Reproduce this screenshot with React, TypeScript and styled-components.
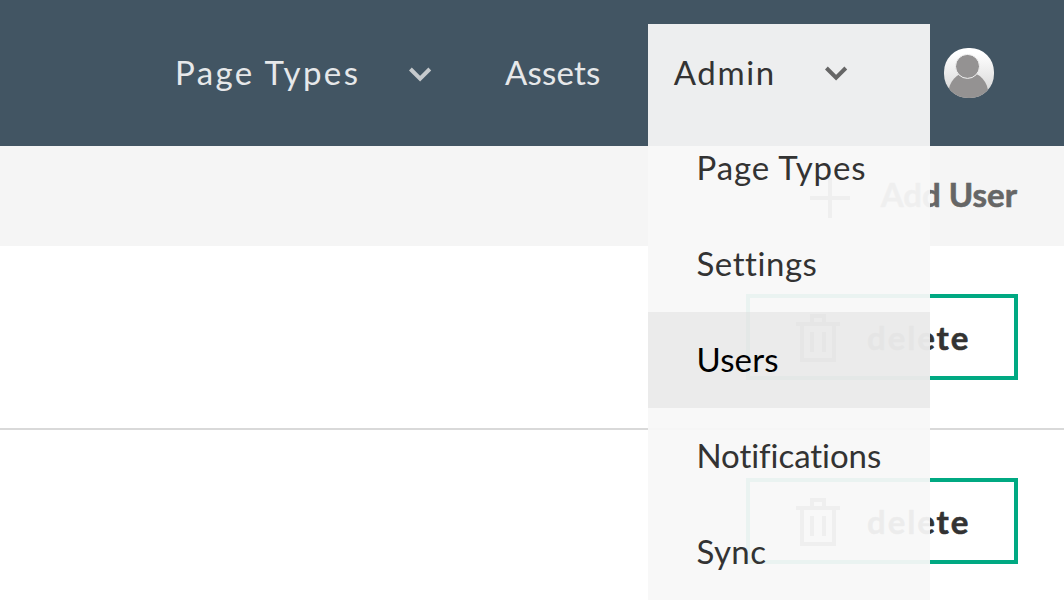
import React from "react";
import styled, { createGlobalStyle } from "styled-components";

const GlobalStyle = createGlobalStyle`
  * { box-sizing: border-box; }
  body {
    margin: 0;
    background: #fff;
    color: #333;
    font-family: Lato, "Liberation Sans", sans-serif;
    font-size: 33px;
    line-height: 40px;
    overflow: hidden;
  }
`;

const Page = styled.div`
  width: 1064px;
  height: 608px;
  overflow: hidden;
`;

const Header = styled.header`
  display: flex;
  justify-content: flex-end;
  align-items: center;
  height: 146px;
  padding-right: 70px;
  background: #425563;
`;

const Nav = styled.nav`
  display: flex;
  gap: 24px;
  height: 98px;
  margin-right: 14px;
`;

const NavItem = styled.div<{ $width: number }>`
  position: relative;
  display: flex;
  align-items: center;
  width: ${(p) => p.$width}px;
  height: 98px;
  padding: 0 0 1px 25px;
  color: #e6e8ea;
`;

const Label = styled.span<{ $spacing?: number; $width?: number; $lift?: number }>`
  flex: none;
  width: ${(p) => (p.$width ? `${p.$width}px` : "auto")};
  padding-bottom: ${(p) => p.$lift ?? 0}px;
  letter-spacing: ${(p) => p.$spacing ?? 0}px;
  white-space: nowrap;
`;

const StrongLabel = styled(Label)`
  font-weight: 700;
  -webkit-text-stroke: 0.6px currentColor;
`;

const Dropdown = styled.div`
  position: absolute;
  z-index: 2;
  top: 0;
  left: 0;
  width: 282px;
  background: rgba(248, 248, 248, 0.945);
  color: #333;
`;

const DropdownHead = styled.div`
  display: flex;
  align-items: center;
  height: 96px;
  padding-left: 25.7px;
`;

const MenuItem = styled.div<{ $active?: boolean }>`
  display: flex;
  align-items: center;
  height: 96px;
  padding: 0 0 2px 48.5px;
  background: ${(p) => (p.$active ? "rgba(221, 221, 221, 0.5)" : "transparent")};
  color: ${(p) => (p.$active ? "#000" : "#333")};
`;

const Avatar = styled.div`
  width: 50px;
  height: 50px;
  border-radius: 24px;
  overflow: hidden;
  background: linear-gradient(#fff 10%, #d2d2d2);

  svg { display: block; }
`;

const Toolbar = styled.div`
  display: flex;
  justify-content: flex-end;
  align-items: center;
  height: 100px;
  padding: 4px 47px 0 0;
  background: #f5f5f5;
  color: #666;

  svg { margin-right: 31px; }
`;

const Row = styled.div`
  display: flex;
  justify-content: flex-end;
  height: 184px;
  padding: 48px 46px 0 0;
  border-bottom: 2px solid #d9d9d9;
`;

const DeleteButton = styled.div`
  display: flex;
  align-items: center;
  width: 272px;
  height: 86px;
  padding-left: 46px;
  border: 4px solid #00a982;

  svg { flex: none; margin: 2px 27px 0 0; }
`;

const Chevron = ({ color }: { color: string }) => (
  <svg width="24" height="24" viewBox="0 0 24 24" fill="none" stroke={color} strokeWidth="4">
    <path d="M1.4 8 11.1 17.6 20.8 8" />
  </svg>
);

const Plus = () => (
  <svg width="40" height="40" viewBox="0 0 40 40" stroke="#666" strokeWidth="4">
    <path d="M20 0V40M0 20H40" />
  </svg>
);

const Trash = () => (
  <svg width="44" height="48" viewBox="0 0 44 48" fill="none" stroke="#666" strokeWidth="4">
    <path d="M6 10V46H38V10M0 10H44M16 10V2H28V10M16 18V38M28 18V38" />
  </svg>
);

const Person = () => (
  <svg width="50" height="50" viewBox="0 0 50 50" fill="#949292">
    <ellipse cx="24.3" cy="46" rx="20" ry="22" />
    <circle cx="23.5" cy="18.4" r="12" stroke="#f2f2f2" strokeWidth="1" />
  </svg>
);

const menu = [
  { name: "Page Types", spacing: 0.85 },
  { name: "Settings", spacing: 0.55 },
  { name: "Users", spacing: 0.15, active: true },
  { name: "Notifications", spacing: -0.06 },
  { name: "Sync", spacing: 0.4 },
];

export default function App() {
  return (
    <Page>
      <GlobalStyle />
      <Header>
        <Nav>
          <NavItem $width={306}>
            <Label $spacing={2.4} $width={234} $lift={1}>Page Types</Label>
            <Chevron color="#c6cacd" />
          </NavItem>
          <NavItem $width={144}>
            <Label $spacing={0.2} $lift={1}>Assets</Label>
          </NavItem>
          <NavItem $width={282}>
            <Dropdown>
              <DropdownHead>
                <Label $spacing={1.65} $width={151.3}>Admin</Label>
                <Chevron color="#666" />
              </DropdownHead>
              {menu.map((m) => (
                <MenuItem key={m.name} $active={m.active}>
                  <Label $spacing={m.spacing}>{m.name}</Label>
                </MenuItem>
              ))}
            </Dropdown>
          </NavItem>
        </Nav>
        <Avatar>
          <Person />
        </Avatar>
      </Header>
      <Toolbar>
        <Plus />
        <StrongLabel $spacing={0} $lift={9}>Add User</StrongLabel>
      </Toolbar>
      {[1, 2].map((id) => (
        <Row key={id}>
          <DeleteButton>
            <Trash />
            <StrongLabel $spacing={1.9}>delete</StrongLabel>
          </DeleteButton>
        </Row>
      ))}
    </Page>
  );
}
